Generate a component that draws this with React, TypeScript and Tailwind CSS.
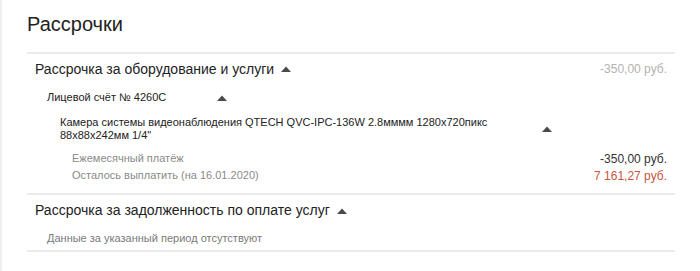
import React from "react";

function Tri() {
  return (
    <svg width="10" height="6" viewBox="0 0 10 6" className="inline-block shrink-0">
      <path d="M0 6 L5 0.5 L10 6 Z" fill="#4a4a4a" />
    </svg>
  );
}

export default function App() {
  return (
    <div className="w-[700px] h-[271px] bg-white border-l-2 border-[#eef0f2] font-['Liberation_Sans',Arial,sans-serif] text-[#222]">
      <div className="pl-[25px] pr-[25px]">
        <h1 className="pt-[12px] h-[52px] text-[20px] leading-[24px] text-[#222]">Рассрочки</h1>

        <div className="border-t-2 border-[#ebebeb]">
          <div className="h-[30px] flex items-center justify-between pl-[8px] pr-[8px]">
            <div className="flex items-center gap-[7px] text-[14px]">
              <span>Рассрочка за оборудование и услуги</span>
              <Tri />
            </div>
            <span className="text-[12px] text-[#b3b3b3]">-350,00 руб.</span>
          </div>

          <div className="h-[27px] flex items-center pl-[20px] text-[11px]">
            <span className="w-[170px]">Лицевой счёт № 4260С</span>
            <Tri />
          </div>

          <div className="pt-[5px] flex items-center pl-[33px] text-[11px] leading-[13px]">
            <div className="w-[482px]">
              Камера системы видеонаблюдения QTECH QVC-IPC-136W 2.8мммм 1280х720пикс
              <br />
              88х88х242мм 1/4"
            </div>
            <Tri />
          </div>

          <div className="pt-[8px] pb-[9px] pl-[45px] pr-[8px]">
            <div className="h-[17px] flex items-center justify-between">
              <span className="text-[11px] text-[#8a8a8a]">Ежемесячный платёж</span>
              <span className="text-[12px] text-[#333]">-350,00 руб.</span>
            </div>
            <div className="h-[17px] flex items-center justify-between">
              <span className="text-[11px] text-[#8a8a8a]">Осталось выплатить (на 16.01.2020)</span>
              <span className="text-[12px] text-[#c8553f]">7 161,27 руб.</span>
            </div>
          </div>
        </div>

        <div className="border-t-2 border-[#ebebeb]">
          <div className="h-[31px] flex items-center pl-[8px]">
            <div className="flex items-center gap-[7px] text-[14px]">
              <span>Рассрочка за задолженность по оплате услуг</span>
              <Tri />
            </div>
          </div>
          <div className="h-[24px] flex items-center pl-[20px] text-[11px] text-[#7a7a7a]">
            Данные за указанный период отсутствуют
          </div>
        </div>
        <div className="border-t-2 border-[#ebebeb]" />
      </div>
    </div>
  );
}
